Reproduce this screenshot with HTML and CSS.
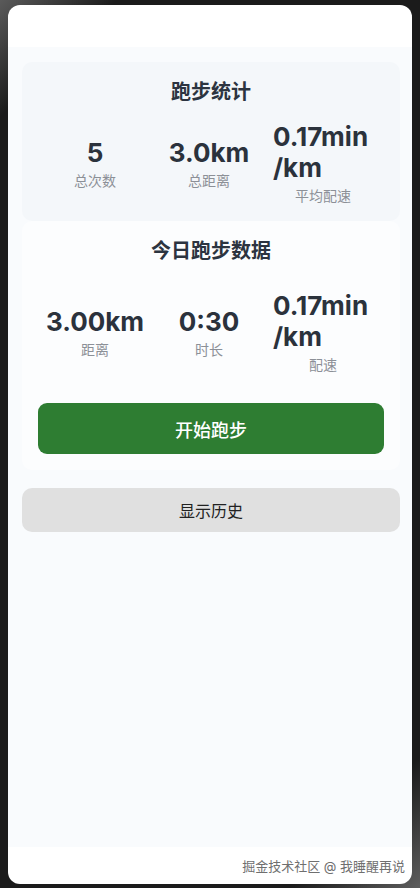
FILE: index.html
```html
<!DOCTYPE html>
<html lang="zh-CN">
<head>
<meta charset="utf-8">
<title>跑步</title>
<link rel="stylesheet" href="styles.css">
</head>
<body>
<div class="screen">
  <div class="app">
    <section class="card stats">
      <h2 class="title">跑步统计</h2>
      <div class="row">
        <div class="cell"><div class="value">5</div><div class="label">总次数</div></div>
        <div class="cell"><div class="value">3.0km</div><div class="label">总距离</div></div>
        <div class="cell"><div class="value">0.17min<wbr>/km</div><div class="label">平均配速</div></div>
      </div>
    </section>
    <section class="today">
      <h2 class="title">今日跑步数据</h2>
      <div class="row">
        <div class="cell"><div class="value">3.00km</div><div class="label">距离</div></div>
        <div class="cell"><div class="value">0:30</div><div class="label">时长</div></div>
        <div class="cell"><div class="value">0.17min<wbr>/km</div><div class="label">配速</div></div>
      </div>
      <button class="start">开始跑步</button>
    </section>
    <button class="history">显示历史</button>
  </div>
  <div class="watermark">掘金技术社区 @ 我睡醒再说</div>
</div>
</body>
</html>
```
FILE: styles.css
```css
* { box-sizing: border-box; }
html, body { margin: 0; padding: 0; }
body {
  width: 420px;
  height: 888px;
  background: linear-gradient(135deg, #5a5a5a 0%, #1b1b1b 9%, #1b1b1b 90%, #5e5e5e 100%);
  padding: 5px 8px 4px 8px;
  font-family: Inter, "Noto Sans CJK SC", sans-serif;
  overflow: hidden;
}
.screen {
  position: relative;
  height: 879px;
  background: #ffffff;
  border-radius: 12px;
  overflow: hidden;
}
.app {
  margin-top: 42px;
  height: 800px;
  background: #f9fbfd;
  padding: 15px 12px 0 14px;
}
.card {
  background: #f4f7fa;
  border-radius: 10px;
}
.stats { padding: 16px 16px 16px; }
.title {
  margin: 0 0 15px;
  font-size: 20px;
  line-height: 28px;
  font-weight: 700;
  text-align: center;
  color: #2c3440;
}
.row {
  display: grid;
  grid-template-columns: 100px 100px 100px;
  column-gap: 14px;
  justify-content: center;
  align-items: center;
  padding-right: 4px;
}
.cell {
  display: flex;
  flex-direction: column;
  align-items: center;
}
.value {
  font-size: 26px;
  line-height: 31px;
  font-weight: 700;
  color: #2b323c;
}
.label {
  margin-top: 4px;
  font-size: 14px;
  line-height: 18px;
  color: #8c9097;
}
.today {
  background: #fcfdfe;
  border-radius: 10px;
  padding: 16px 16px 16px;
}
.today .title { margin-bottom: 25px; }
.today .row { margin-bottom: 29px; }
.start {
  display: block;
  width: 100%;
  height: 51px;
  border: none;
  border-radius: 9px;
  background: #2e7d32;
  color: #ffffff;
  font-family: inherit;
  font-size: 18px;
  font-weight: 500;
}
.history {
  display: block;
  width: 100%;
  height: 44px;
  margin-top: 18px;
  border: none;
  border-radius: 10px;
  background: #e0e0e0;
  color: #222222;
  font-family: inherit;
  font-size: 16px;
}
.watermark {
  position: absolute;
  right: 7px;
  bottom: 9px;
  font-size: 13px;
  line-height: 18px;
  color: #6f6f6f;
  text-shadow: 0 0 2px #ffffff;
}
```
